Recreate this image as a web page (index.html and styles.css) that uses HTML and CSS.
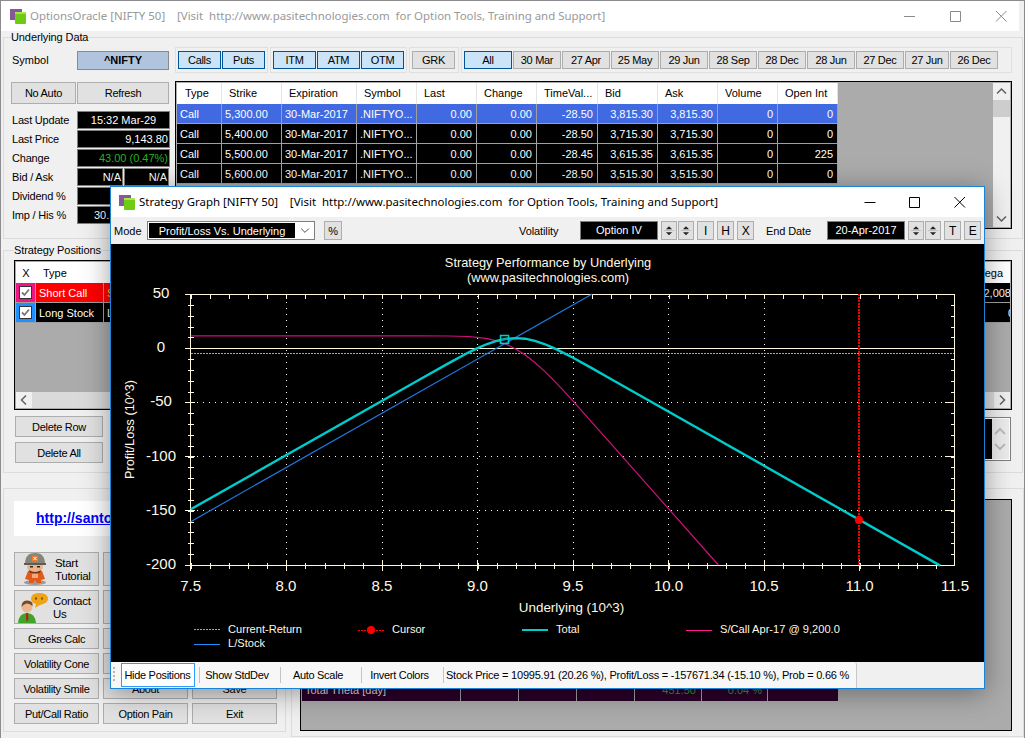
FILE: index.html
```html
<!DOCTYPE html>
<html lang="en">
<head>
<meta charset="utf-8">
<title>OptionsOracle</title>
<link rel="stylesheet" href="styles.css">
</head>
<body>
<svg class="defs" width="0" height="0" aria-hidden="true">
  <defs>
    <symbol id="app-icon" viewBox="0 0 16 15">
      <rect x="0" y="0" width="12" height="11" fill="#86589a"/>
      <rect x="5" y="3" width="11" height="12" rx="1" fill="#6ccb12"/>
      <rect x="5" y="3" width="11" height="2" fill="#a6e64a"/>
    </symbol>
    <symbol id="spin" viewBox="0 0 16 18">
      <path d="M4.5 7.5 8 4l3.500 3.500z" fill="#222"/>
      <path d="M4.500 11 8 14.500 11.500 11z" fill="#222"/>
      <path d="M2 9h12" stroke="#bbb"/>
    </symbol>
    <symbol id="check" viewBox="0 0 13 13">
      <rect x=".5" y=".5" width="12" height="12" fill="#fff" stroke="#333"/>
      <path d="M3 6.500 5.500 9 10 3.500" fill="none" stroke="#777" stroke-width="1.800"/>
    </symbol>
  </defs>
</svg>

<div class="window">
  <header class="titlebar">
    <svg class="app-icon"><use href="#app-icon"/></svg>
    <span class="title-text dim">OptionsOracle [NIFTY 50]    [Visit  http://www.pasitechnologies.com  for Option Tools, Training and Support]</span>
    <div class="winctl dim-ctl">
      <svg viewBox="0 0 36 30"><path d="M13 15.500h11"/></svg>
      <svg viewBox="0 0 36 30"><path d="M13.500 10.500h10v10h-10z"/></svg>
      <svg viewBox="0 0 36 30"><path d="M13 10l10.500 10.500M23.500 10 13 20.500"/></svg>
    </div>
  </header>

  <section class="group group-underlying">
    <div class="legend">Underlying Data</div>
    <div class="ud-grid">
      <div class="sym-row">
        <span class="sym-label">Symbol</span>
        <span class="sym-value">^NIFTY</span>
      </div>
      <div class="panels">
        <div class="panel panel-calls">
          <button class="btn on w43">Calls</button><button class="btn on w43">Puts</button>
        </div>
        <div class="panel panel-itm">
          <button class="btn on w43">ITM</button><button class="btn on w43">ATM</button><button class="btn on w43">OTM</button>
        </div>
        <div class="panel panel-grk">
          <button class="btn w43">GRK</button>
        </div>
        <div class="panel panel-dates">
          <button class="btn on w48">All</button>
          <button class="btn w48">30 Mar</button>
          <button class="btn w48">27 Apr</button>
          <button class="btn w48">25 May</button>
          <button class="btn w48">29 Jun</button>
          <button class="btn w48">28 Sep</button>
          <button class="btn w48">28 Dec</button>
          <button class="btn w48">28 Jun</button>
          <button class="btn w48">27 Dec</button>
          <button class="btn w44">27 Jun</button>
          <button class="btn w48">26 Dec</button>
        </div>
      </div>

      <div class="quote">
        <div class="quote-btns">
          <button class="btn qb-auto">No Auto</button>
          <button class="btn qb-refresh">Refresh</button>
        </div>
        <div class="quote-rows">
          <div class="q-row"><span class="q-label">Last Update</span><span class="q-val center">15:32 Mar-29</span></div>
          <div class="q-row"><span class="q-label">Last Price</span><span class="q-val">9,143.80</span></div>
          <div class="q-row"><span class="q-label">Change</span><span class="q-val green">43.00 (0.47%)</span></div>
          <div class="q-row"><span class="q-label">Bid / Ask</span><span class="q-val half">N/A</span><span class="q-val half">N/A</span></div>
          <div class="q-row"><span class="q-label">Dividend %</span><span class="q-val">0.00</span></div>
          <div class="q-row"><span class="q-label">Imp / His %</span><span class="q-val q-imp">30.10 / 14.20</span></div>
        </div>
      </div>

      <div class="chain-box">
        <div class="chain-scroll">
          <table class="chain">
            <colgroup>
              <col class="c45"><col class="c60"><col class="c75"><col class="c60"><col class="c60"><col class="c60"><col class="c61"><col class="c60"><col class="c60"><col class="c60"><col class="c60">
            </colgroup>
            <thead>
              <tr><th class="t8">Type</th><th>Strike</th><th>Expiration</th><th>Symbol</th><th>Last</th><th>Change</th><th>TimeVal...</th><th>Bid</th><th>Ask</th><th>Volume</th><th>Open Int</th></tr>
            </thead>
            <tbody>
              <tr class="sel"><td>Call</td><td>5,300.00</td><td>30-Mar-2017</td><td>.NIFTYO...</td><td class="r">0.00</td><td class="r">0.00</td><td class="r">-28.50</td><td class="r">3,815.30</td><td class="r">3,815.30</td><td class="r">0</td><td class="r">0</td></tr>
              <tr><td>Call</td><td>5,400.00</td><td>30-Mar-2017</td><td>.NIFTYO...</td><td class="r">0.00</td><td class="r">0.00</td><td class="r">-28.50</td><td class="r">3,715.30</td><td class="r">3,715.30</td><td class="r">0</td><td class="r">0</td></tr>
              <tr><td>Call</td><td>5,500.00</td><td>30-Mar-2017</td><td>.NIFTYO...</td><td class="r">0.00</td><td class="r">0.00</td><td class="r">-28.45</td><td class="r">3,615.35</td><td class="r">3,615.35</td><td class="r">0</td><td class="r">225</td></tr>
              <tr><td>Call</td><td>5,600.00</td><td>30-Mar-2017</td><td>.NIFTYO...</td><td class="r">0.00</td><td class="r">0.00</td><td class="r">-28.50</td><td class="r">3,515.30</td><td class="r">3,515.30</td><td class="r">0</td><td class="r">0</td></tr>
            </tbody>
          </table>
        </div>
        <div class="vscroll">
          <svg viewBox="0 0 17 17"><path d="M4 10.500 8.500 6 13 10.500" /></svg>
          <div class="vthumb"></div>
          <div class="vtrack"></div>
          <svg viewBox="0 0 17 17"><path d="M4 6.500 8.500 11 13 6.500" /></svg>
        </div>
      </div>
    </div>
  </section>

  <section class="group group-strategy">
    <div class="legend">Strategy Positions</div>
    <div class="pos-box">
      <div class="pos-clip">
        <table class="pos">
          <colgroup><col class="p20"><col class="p68"><col><col class="p49"></colgroup>
          <thead><tr><th class="center">X</th><th class="t7">Type</th><th></th><th class="t7">Vega</th></tr></thead>
          <tbody>
            <tr>
              <td class="chk pink"><svg class="checkbox"><use href="#check"/></svg></td>
              <td class="red">Short Call</td><td class="red amber">Sell</td><td class="rr rr8">-2,008</td>
            </tr>
            <tr>
              <td class="chk blue"><svg class="checkbox"><use href="#check"/></svg></td>
              <td>Long Stock</td><td>Long</td><td class="rr">0</td>
            </tr>
          </tbody>
        </table>
      </div>
      <div class="hscroll">
        <svg viewBox="0 0 16 16"><path d="M10 3.500 5.500 8 10 12.500"/></svg>
        <div class="hthumb"></div>
        <svg viewBox="0 0 16 16"><path d="M6 3.500 10.500 8 6 12.500"/></svg>
      </div>
    </div>
    <div class="pos-actions">
      <div class="del-btns">
        <button class="btn del">Delete Row</button>
        <button class="btn del">Delete All</button>
      </div>
      <div class="notes">
        <div class="notes-black"></div>
        <div class="notes-scroll">
          <svg viewBox="0 0 16 16"><path d="M3 11 8 6l5 5"/></svg>
          <svg viewBox="0 0 16 16"><path d="M3 5l5 5 5-5"/></svg>
        </div>
      </div>
    </div>
  </section>

  <div class="lower">
    <section class="launch">
      <div class="link-box"><a class="link" href="#">http://santoshpasi.com</a></div>
      <div class="launch-grid">
        <button class="btn big">
          <svg class="mascot" viewBox="0 0 26 32">
            <ellipse cx="13" cy="29.500" rx="11" ry="2.500" fill="#9a9a9a"/>
            <path d="M6 18h14l3 8-4 1v3h-4l-2-3-2 3H7v-3l-4-1z" fill="#e2591a"/>
            <rect x="10" y="21" width="6" height="4" fill="#f7a878"/>
            <ellipse cx="13" cy="14" rx="8" ry="5.500" fill="#e9b48c"/>
            <path d="M7 17q6 4 12 0l-1 3H8z" fill="#7a3a1a"/>
            <path d="M8 13h3v1.500H8zM15 13h3v1.500h-3z" fill="#40200c"/>
            <path d="M3 11C3 3 7 0 13 0s10 3 10 11z" fill="#85857c"/>
            <path d="M2 10h22v2H2z" fill="#5d5d55"/>
            <rect x="10" y="2.500" width="6" height="6" fill="#ef7a28"/>
            <path d="M11.500 4l3 3M14.500 4l-3 3" stroke="#fff"/>
          </svg>
          <span class="big-text">Start<br>Tutorial</span>
        </button>
        <button class="btn big"></button>
        <button class="btn big"></button>
        <button class="btn big big-contact">
          <svg class="person" viewBox="0 0 32 32">
            <path d="M1 31q1-10 9-10t9 10z" fill="#3fa52a"/>
            <path d="M9 21h2l.5 6-1.500 3-1-3z" fill="#b8201c"/>
            <circle cx="10" cy="15" r="5.500" fill="#eab78f"/>
            <path d="M4.500 15q0-7 6-6.500t5 5.500q-3-3-6-2.500t-5 3.500z" fill="#7a4a22"/>
            <path d="M14 7q0-6 8-6t9 5-8 7l-5 3 1-4q-5-1-5-5z" fill="#f0a314"/>
            <path d="M18 5.500h2v2h-2zM24 5.500h2v2h-2z" fill="#8a4c05"/>
          </svg>
          <span class="big-text contact-text">Contact<br>Us</span>
        </button>
        <button class="btn big"></button>
        <button class="btn big"></button>
        <button class="btn">Greeks Calc</button>
        <button class="btn">Payoff Calc</button>
        <button class="btn">Options</button>
        <button class="btn">Volatility Cone</button>
        <button class="btn">Calculator</button>
        <button class="btn">Load</button>
        <button class="btn">Volatility Smile</button>
        <button class="btn">About</button>
        <button class="btn">Save</button>
        <button class="btn">Put/Call Ratio</button>
        <button class="btn">Option Pain</button>
        <button class="btn">Exit</button>
      </div>
    </section>
    <section class="results">
      <div class="results-box">
        <div class="res-row">
          <span class="res-cell rc159">Total Theta [day]</span>
          <span class="res-cell rc58"></span>
          <span class="res-cell rc58"></span>
          <span class="res-cell rc58"></span>
          <span class="res-cell rc67 pos-green">451.50</span>
          <span class="res-cell rc66 pos-green">0.04 %</span>
          <span class="res-cell rc70"></span>
        </div>
      </div>
    </section>
  </div>
</div>

<div class="dialog">
  <header class="dlg-title">
    <svg class="app-icon"><use href="#app-icon"/></svg>
    <span class="title-text">Strategy Graph [NIFTY 50]    [Visit  http://www.pasitechnologies.com  for Option Tools, Training and Support]</span>
    <div class="dlg-ctl">
      <svg class="c44" viewBox="0 0 44 30"><path d="M16.500 15.500h11"/></svg>
      <svg class="c44" viewBox="0 0 44 30"><path d="M17.500 10.500h10v10h-10z"/></svg>
      <svg class="c48" viewBox="0 0 48 30"><path d="M18.500 10l10.500 10.500M29 10 18.500 20.500"/></svg>
    </div>
  </header>
  <div class="dlg-tools">
    <span class="tb-mode">Mode</span>
    <div class="tb-combo"><span class="tb-combo-val">Profit/Loss Vs. Underlying</span>
      <svg viewBox="0 0 16 18"><path d="M4 7l4 4 4-4"/></svg>
    </div>
    <button class="btn tb-pct">%</button>
    <span class="tb-vol">Volatility</span>
    <span class="tb-black">Option IV</span>
    <svg class="spin s3"><use href="#spin"/></svg>
    <svg class="spin s1"><use href="#spin"/></svg>
    <button class="btn tb-sq">I</button>
    <button class="btn tb-sq">H</button>
    <button class="btn tb-sq">X</button>
    <span class="tb-end">End Date</span>
    <span class="tb-black">20-Apr-2017</span>
    <svg class="spin s3"><use href="#spin"/></svg>
    <svg class="spin s1"><use href="#spin"/></svg>
    <button class="btn tb-sq">T</button>
    <button class="btn tb-sq">E</button>
  </div>

  <svg class="chart" viewBox="111 244 873 418">
    <text class="ct" x="548" y="266.500">Strategy Performance by Underlying</text>
    <text class="ct" x="548" y="282">(www.pasitechnologies.com)</text>

    <!-- grid -->
    <g class="grid">
      <path d="M191 402.500H954M191 456.500H954M191 510.500H954"/>
      <path d="M286.500 296V565M382.500 296V565M477.500 296V565M573.500 296V565M668.500 296V565M764.500 296V565"/>
    </g>

    <!-- axes -->
    <g class="axis">
      <path d="M185 294.500H954.500M185 348.500H954.500M185 402.500H195M185 456.500H195M185 510.500H195M185 565.500H954.500"/>
      <path d="M190.500 294V571M954.500 294V566"/>
      <path d="M286.500 560V571M382.500 560V571M477.500 560V571M573.500 560V571M668.500 560V571M764.500 560V571M859.500 560V571M945 402.500H954M945 456.500H954M945 510.500H954"/>
    </g>
    <g class="ticks">
      <path class="tk-top" d="M190.700 296.500H955"/>
      <path class="tk-bot" d="M190.700 565.500H955"/>
      <path class="tk-left" d="M190.500 294V566"/>
      <path class="tk-right" d="M952.500 294V566"/>
    </g>

    <!-- reference lines -->
    <path class="l-current" d="M191 353.500H954"/>
    <path class="l-cursor" d="M859 294V565"/>

    <!-- curves -->
    <path class="l-call" d="M190.700 335.900L420.100 335.900 448.800 336 467.900 336.500 477.500 337.300 487.100 338.600 496.600 340.800 506.200 344.200 515.700 348.900 525.300 355 534.900 362.500 544.400 371.100 554 380.600 563.500 390.700 573.100 401.200 592.200 422.600 611.300 444.200 718.400 565"/>
    <path class="l-stock" d="M190.700 521.700L592.200 294"/>
    <path class="l-total" d="M190.700 509.300L420.100 379.300 448.800 363.100 467.900 352.800 477.500 348.100 487.100 344 496.600 340.800 506.200 338.800 515.700 338.100 525.300 338.700 534.900 340.800 544.400 344 554 348.100 563.500 352.800 573.100 357.800 592.200 368.400 611.300 379.200 940.200 565.600"/>
    <rect class="marker" x="500.500" y="335.500" width="8" height="8"/>
    <circle class="dot" cx="859" cy="520" r="4"/>

    <!-- axis labels -->
    <g class="tick-label">
      <text x="161" y="298">50</text>
      <text x="161" y="352">0</text>
      <text x="161" y="406">-50</text>
      <text x="161" y="461">-100</text>
      <text x="161" y="515">-150</text>
      <text x="161" y="569">-200</text>
      <text x="190.700" y="591">7.5</text>
      <text x="286" y="591">8.0</text>
      <text x="382" y="591">8.5</text>
      <text x="477.500" y="591">9.0</text>
      <text x="573" y="591">9.5</text>
      <text x="668.500" y="591">10.0</text>
      <text x="764" y="591">10.5</text>
      <text x="859.500" y="591">11.0</text>
      <text x="955" y="591">11.5</text>
    </g>
    <text class="axis-title" x="571.500" y="612">Underlying (10^3)</text>
    <text class="axis-title-y" transform="translate(134 429.500) rotate(-90)">Profit/Loss (10^3)</text>

    <!-- legend -->
    <path class="lg-current" d="M194 629.500H220"/>
    <path class="lg-stock" d="M194 644H220"/>
    <path class="lg-cursor" d="M358 630H384"/>
    <circle class="dot" cx="371" cy="630" r="4"/>
    <path class="lg-total" d="M522 630H548"/>
    <path class="lg-call" d="M686 630H712"/>
    <g class="lg-text">
      <text x="228" y="633">Current-Return</text>
      <text x="228" y="647">L/Stock</text>
      <text x="392" y="633">Cursor</text>
      <text x="556" y="633">Total</text>
      <text x="720" y="633">S/Call Apr-17 @ 9,200.0</text>
    </g>
  </svg>

  <div class="dlg-strip">
    <div class="strip-bar">
      <span class="grip"></span>
      <button class="strip-btn active sb74">Hide Positions</button>
      <i class="sep"></i>
      <button class="strip-btn sb80">Show StdDev</button>
      <i class="sep"></i>
      <button class="strip-btn sb80">Auto Scale</button>
      <i class="sep"></i>
      <button class="strip-btn sb81">Invert Colors</button>
      <i class="sep"></i>
      <span class="status">Stock Price = 10995.91 (20.26 %), Profit/Loss = -157671.34 (-15.10 %), Prob = 0.66 %</span>
    </div>
  </div>
</div>
</body>
</html>
```

FILE: styles.css
```css
* { box-sizing: border-box; }

html, body {
  margin: 0;
  padding: 0;
  width: 1025px;
  height: 738px;
  overflow: hidden;
  background: #8c8c90;
  font-family: "Liberation Sans", Arial, sans-serif;
  font-size: 11px;
  color: #000;
}

.defs { position: absolute; }

button { font: inherit; color: inherit; margin: 0; padding: 0; }

.window {
  width: 1023px;
  height: 737px;
  margin: 1px 0 0 1px;
  background: #f0f0f0;
  overflow: hidden;
}

/* title bars */
.titlebar {
  height: 30px;
  width: 1018px;
  background: #fff;
  display: flex;
  align-items: center;
  padding-left: 9px;
}
.app-icon { width: 16px; height: 15px; flex: none; }
.title-text {
  font-family: "Noto Sans", "Open Sans", sans-serif;
  font-size: 11.450px;
  white-space: pre;
  margin-left: 4px;
  margin-bottom: 2px;
}
.dim { color: #999; }
.winctl { margin-left: auto; display: flex; gap: 10px; }
.winctl svg { width: 36px; height: 30px; }
.winctl path { fill: none; stroke: #8a8a8a; stroke-width: 1; }

/* groups */
.group {
  margin-left: 2px;
  margin-right: 1px;
  border: 1px solid #dcdcdc;
  padding-left: 7px;
  padding-right: 11px;
}
.legend {
  margin-top: -7px;
  height: 14px;
  line-height: 13px;
  width: fit-content;
  font-size: 11px;
  letter-spacing: -.1px;
  background: #f0f0f0;
}
.group-underlying { margin-top: 6px; height: 202px; }
.group-strategy { margin-top: 11px; height: 223px; margin-left: 2px; padding-left: 10px; }

.ud-grid {
  margin-top: 2px;
  display: grid;
  grid-template-columns: 159px 837px;
  grid-template-rows: 26px 148px;
  column-gap: 5px;
  row-gap: 8px;
}

.sym-row { display: flex; padding-top: 4px; }
.sym-label { width: 66px; padding-left: 1px; line-height: 19px; }
.sym-value {
  width: 92px;
  height: 19px;
  line-height: 17px;
  text-align: center;
  font-weight: bold;
  background: #b0c4de;
  border: 1px solid #8a8a8a;
}

.panels { display: flex; gap: 2px; }
.panel {
  display: flex;
  gap: 1px;
  border: 1px solid #dfdfdf;
  padding: 3px 2px;
  height: 26px;
}
.panel-calls { width: 93px; }
.panel-itm { width: 137px; }
.panel-grk { width: 50px; }
.panel-dates { width: 551px; }

.btn {
  background: #e1e1e1;
  border: 1px solid #adadad;
  text-align: center;
  white-space: nowrap;
  letter-spacing: -.3px;
}
.btn.on { background: #cce4f7; border-color: #005499; }
.w43 { width: 43px; }
.w44 { width: 44px; }
.w48 { width: 48px; }

.quote { padding-top: 1px; }
.quote-btns { display: flex; gap: 1px; height: 22px; }
.qb-auto { width: 65px; }
.qb-refresh { width: 92px; }
.quote-rows { margin-top: 7px; display: flex; flex-direction: column; gap: 1px; }
.q-row { display: flex; height: 18px; gap: 1px; }
.q-label { width: 65px; flex: none; padding-left: 1px; line-height: 18px; white-space: nowrap; letter-spacing: -.2px; }
.q-val {
  flex: 1;
  background: #000;
  color: #fff;
  border: 1px solid #7f7f7f;
  line-height: 16px;
  text-align: right;
  padding-right: 1px;
  white-space: nowrap;
  overflow: hidden;
}
.q-val.center { text-align: center; padding-right: 0; }
.q-val.green { color: #22b422; }
.q-val.half { flex: none; }
.q-val.half:nth-of-type(2) { width: 46px; }
.q-val.half:nth-of-type(3) { width: 45px; }
.q-imp { text-align: left; padding-left: 16px; }

/* option chain */
.chain-box {
  border: 1px solid #000;
  padding: 1px;
  background: #ababab;
  display: flex;
  justify-content: space-between;
  height: 148px;
}
.chain-scroll { overflow: hidden; }
table { border-collapse: separate; border-spacing: 0; table-layout: fixed; }
.chain { width: 661px; color: #fff; }
.c45 { width: 45px; } .c60 { width: 60px; } .c61 { width: 61px; } .c75 { width: 75px; }
.chain th {
  height: 21px;
  background: #fff;
  color: #000;
  font-weight: normal;
  text-align: left;
  padding: 0 0 0 7px;
  border-right: 1px solid #e4e4e4;
  border-bottom: 1px solid #fff;
}
.chain th.t8 { padding-left: 8px; }
.chain td {
  height: 20px;
  background: #000;
  border-right: 1px solid #a0a0a0;
  border-bottom: 1px solid #a0a0a0;
  padding: 0 3px;
  white-space: nowrap;
  overflow: hidden;
}
.chain td.r { text-align: right; padding-right: 4px; }
.chain tr.sel td { background: #4169e1; }

.vscroll {
  width: 17px;
  background: #f0f0f0;
  display: flex;
  flex-direction: column;
}
.vscroll svg { width: 17px; height: 17px; flex: none; }
.vscroll path { fill: none; stroke: #606060; stroke-width: 1.5; }
.vthumb { height: 17px; background: #cdcdcd; }
.vtrack { flex: 1; }

/* strategy */
.pos-box {
  margin-top: 2px;
  width: 998px;
  height: 150px;
  border: 1px solid #000;
  padding: 1px;
  background: #ababab;
  display: flex;
  flex-direction: column;
  justify-content: space-between;
}
.pos-clip { overflow: hidden; }
.pos { width: 1004px; color: #fff; }
.p20 { width: 20px; } .p68 { width: 68px; } .p49 { width: 49px; }
.pos th {
  height: 21px;
  background: #fff;
  color: #000;
  font-weight: normal;
  text-align: left;
  padding: 0;
}
.pos th.center { text-align: center; }
.pos th.t7 { padding-left: 7px; }
.pos td {
  height: 20px;
  background: #000;
  border-right: 1px solid #a0a0a0;
  border-bottom: 1px solid #a0a0a0;
  padding: 0 3px;
  white-space: nowrap;
}
.pos td.chk { padding: 0; text-align: center; vertical-align: middle; line-height: 0; }
.pos td.pink { background: #ee1585; }
.pos td.blue { background: #1e90ff; }
.pos td.red { background: #ff0000; }
.pos td.amber { color: #ffc000; }
.pos td.rr { text-align: right; padding-right: 5px; }
.pos td.rr8 { padding-right: 8px; }
.checkbox { width: 13px; height: 13px; }

.hscroll { height: 16px; background: #f0f0f0; display: flex; }
.hscroll svg { width: 16px; height: 16px; flex: none; }
.hscroll path { fill: none; stroke: #606060; stroke-width: 1.5; }
.hthumb { flex: 1; background: #dadada; }

.pos-actions {
  margin-top: 6px;
  display: flex;
  justify-content: space-between;
  width: 997px;
}
.del-btns { display: flex; flex-direction: column; gap: 5px; }
.del { width: 88px; height: 21px; margin-left: 1px; }
.notes {
  width: 500px;
  height: 44px;
  margin-top: 1px;
  display: flex;
  border: 1px solid #7f7f7f;
  padding: 1px;
  background: #fff;
}
.notes-black { flex: 1; background: #000; }
.notes-scroll {
  width: 17px;
  background: #ececec;
  display: flex;
  flex-direction: column;
  justify-content: space-between;
  padding: 4px 0;
}
.notes-scroll svg { width: 16px; height: 16px; }
.notes-scroll path { fill: none; stroke: #bdbdbd; stroke-width: 2; }

/* lower */
.lower { margin-top: 15px; margin-left: 2px; display: flex; gap: 5px; }
.launch {
  width: 283px;
  height: 244px;
  border: 1px solid #dcdcdc;
  padding: 12px 0 0 10px;
}
.link-box {
  width: 263px;
  height: 35px;
  background: #fff;
  padding-left: 22px;
  line-height: 35px;
}
.link { font-size: 14px; font-weight: bold; color: #0000ff; }
.launch-grid {
  margin-top: 16px;
  display: grid;
  grid-template-columns: 85px 85px 85px;
  grid-template-rows: 34px 34px 21px 21px 21px 21px;
  column-gap: 4px;
  row-gap: 4px;
}
.btn.big { display: flex; align-items: center; text-align: left; }
.big-text { line-height: 13px; margin-left: 7px; margin-top: 2px; font-size: 11.500px; }
.mascot { width: 26px; height: 32px; margin-left: 7px; flex: none; }
.person { width: 32px; height: 32px; margin-left: 2px; flex: none; margin-top: 1px; }
.contact-text { margin-left: 4px; }

.results {
  flex: 1;
  height: 249px;
  border: 1px solid #dcdcdc;
  padding: 10px 8px 0 8px;
}
.results-box {
  width: 712px;
  height: 232px;
  border: 1px solid #000;
  padding: 181px 1px 0;
  background: #ababab;
}
.res-row { display: flex; height: 20px; color: #ddd; }
.res-cell {
  background: #2a002a;
  border-right: 1px solid #a0a0a0;
  line-height: 18px;
  padding: 0 3px;
  white-space: nowrap;
  text-align: right;
}
.rc159 { width: 159px; text-align: left; }
.rc58 { width: 58px; }
.rc67 { width: 67px; }
.rc66 { width: 66px; }
.rc70 { width: 70px; border-right: 0; }
.pos-green { color: #2e9a2e; padding-right: 5px; }

/* dialog */
.dialog {
  position: absolute;
  left: 110px;
  top: 186px;
  width: 875px;
  height: 503px;
  background: #f0f0f0;
  border: 1px solid #1883d7;
  box-shadow: 0 4px 26px rgba(0, 0, 0, .38);
  display: flex;
  flex-direction: column;
}
.dlg-title {
  height: 30px;
  flex: none;
  background: #fff;
  display: flex;
  align-items: center;
  padding-left: 8px;
}
.dlg-ctl { margin-left: auto; display: flex; }
.dlg-ctl path { fill: none; stroke: #000; stroke-width: 1; }
.c44 { width: 44px; height: 30px; }
.c48 { width: 48px; height: 30px; }

.dlg-tools {
  height: 27px;
  flex: none;
  display: flex;
  align-items: center;
}
.tb-mode { margin-left: 3px; width: 33px; }
.tb-combo {
  width: 168px;
  height: 19px;
  border: 1px solid #7f7f7f;
  background: #fff;
  display: flex;
}
.tb-combo-val {
  width: 149px;
  background: #000;
  color: #fff;
  text-align: center;
  line-height: 17px;
  border: 1px solid #fff;
  border-right-width: 2px;
}
.tb-combo svg { width: 16px; height: 17px; }
.tb-combo path { fill: none; stroke: #444; }
.tb-pct { margin-left: 9px; width: 18px; height: 19px; }
.tb-vol { margin-left: 177px; width: 61px; letter-spacing: -.1px; }
.tb-end { margin-left: 12px; width: 61px; letter-spacing: -.1px; }
.tb-black {
  width: 78px;
  height: 19px;
  background: #000;
  color: #fff;
  border: 1px solid #7f7f7f;
  text-align: center;
  line-height: 17px;
}
.spin { width: 16px; height: 19px; background: #e1e1e1; border: 1px solid #adadad; }
.s3 { margin-left: 3px; }
.s1 { margin-left: 1px; }
.tb-sq { width: 17px; height: 19px; margin-left: 3px; font-size: 12px; }

/* chart */
.chart { width: 873px; height: 418px; flex: none; background: #000; display: block; }
.chart text { font-family: "Liberation Sans", Arial, sans-serif; fill: #fff8e6; }
.ct { font-size: 12.800px; text-anchor: middle; }
.tick-label text { font-size: 15px; text-anchor: middle; }
.axis-title { font-size: 13.400px; text-anchor: middle; }
.axis-title-y { font-size: 12.700px; text-anchor: middle; }
.lg-text text { font-size: 11.100px; }
.grid path { fill: none; stroke: #fff; stroke-width: 1; stroke-dasharray: 1 5; shape-rendering: crispEdges; }
.axis path { fill: none; stroke: #fff8dc; stroke-width: 1; shape-rendering: crispEdges; }
.ticks path { fill: none; stroke: #fff8dc; shape-rendering: crispEdges; }
.tk-top { stroke-width: 4; stroke-dasharray: 1 18.120; }
.tk-bot { stroke-width: 6; stroke-dasharray: 1 18.120; }
.tk-left { stroke-width: 6; stroke-dasharray: 1 9.840; }
.tk-right { stroke-width: 4; stroke-dasharray: 1 9.840; }
.l-current { fill: none; stroke: #ff9c00; stroke-width: 1; stroke-dasharray: 2 1; shape-rendering: crispEdges; }
.l-cursor { fill: none; stroke: #ff0000; stroke-width: 2; stroke-dasharray: 2 1; }
.l-call { fill: none; stroke: #d0107a; stroke-width: 1.200; }
.l-stock { fill: none; stroke: #1e78dc; stroke-width: 1.200; }
.l-total { fill: none; stroke: #00cccc; stroke-width: 2.400; }
.marker { fill: #000; stroke: #00cccc; stroke-width: 1.500; fill-opacity: .15; }
.dot { fill: #ff0000; }
.lg-current { fill: none; stroke: #ff9c00; stroke-width: 1; stroke-dasharray: 2 1; shape-rendering: crispEdges; }
.lg-stock { stroke: #1e90ff; stroke-width: 1; shape-rendering: crispEdges; }
.lg-cursor { stroke: #ff0000; stroke-dasharray: 2 1; shape-rendering: crispEdges; }
.lg-total { stroke: #00cccc; stroke-width: 2; shape-rendering: crispEdges; }
.lg-call { stroke: #ff1493; stroke-width: 1; shape-rendering: crispEdges; }

/* status strip */
.dlg-strip { height: 26px; flex: none; }
.strip-bar {
  width: 746px;
  height: 26px;
  background: #f7f7f7;
  border-right: 1px solid #c8c8c8;
  border-top-right-radius: 3px;
  display: flex;
  align-items: center;
  padding-left: 2px;
  letter-spacing: -.2px;
}
.grip {
  width: 2px;
  height: 16px;
  margin-right: 6px;
  flex: none;
  background: repeating-linear-gradient(#b5b5b5 0 2px, transparent 2px 4px);
}
.strip-btn {
  background: none;
  border: 1px solid transparent;
  height: 24px;
  text-align: center;
  white-space: nowrap;
  flex: none;
  letter-spacing: -.3px;
  padding-right: 6px;
}
.strip-btn.active { background: #fff; border-color: #3399ff; padding-right: 1px; }
.sb74 { width: 74px; }
.sb80 { width: 80px; }
.sb81 { width: 81px; }
.sep { width: 1px; height: 16px; background: #c4c4c4; margin: 0; flex: none; }
.sb74 + .sep { margin-left: 4px; }
.status { margin-left: 2px; white-space: nowrap; letter-spacing: -.22px; }
```
